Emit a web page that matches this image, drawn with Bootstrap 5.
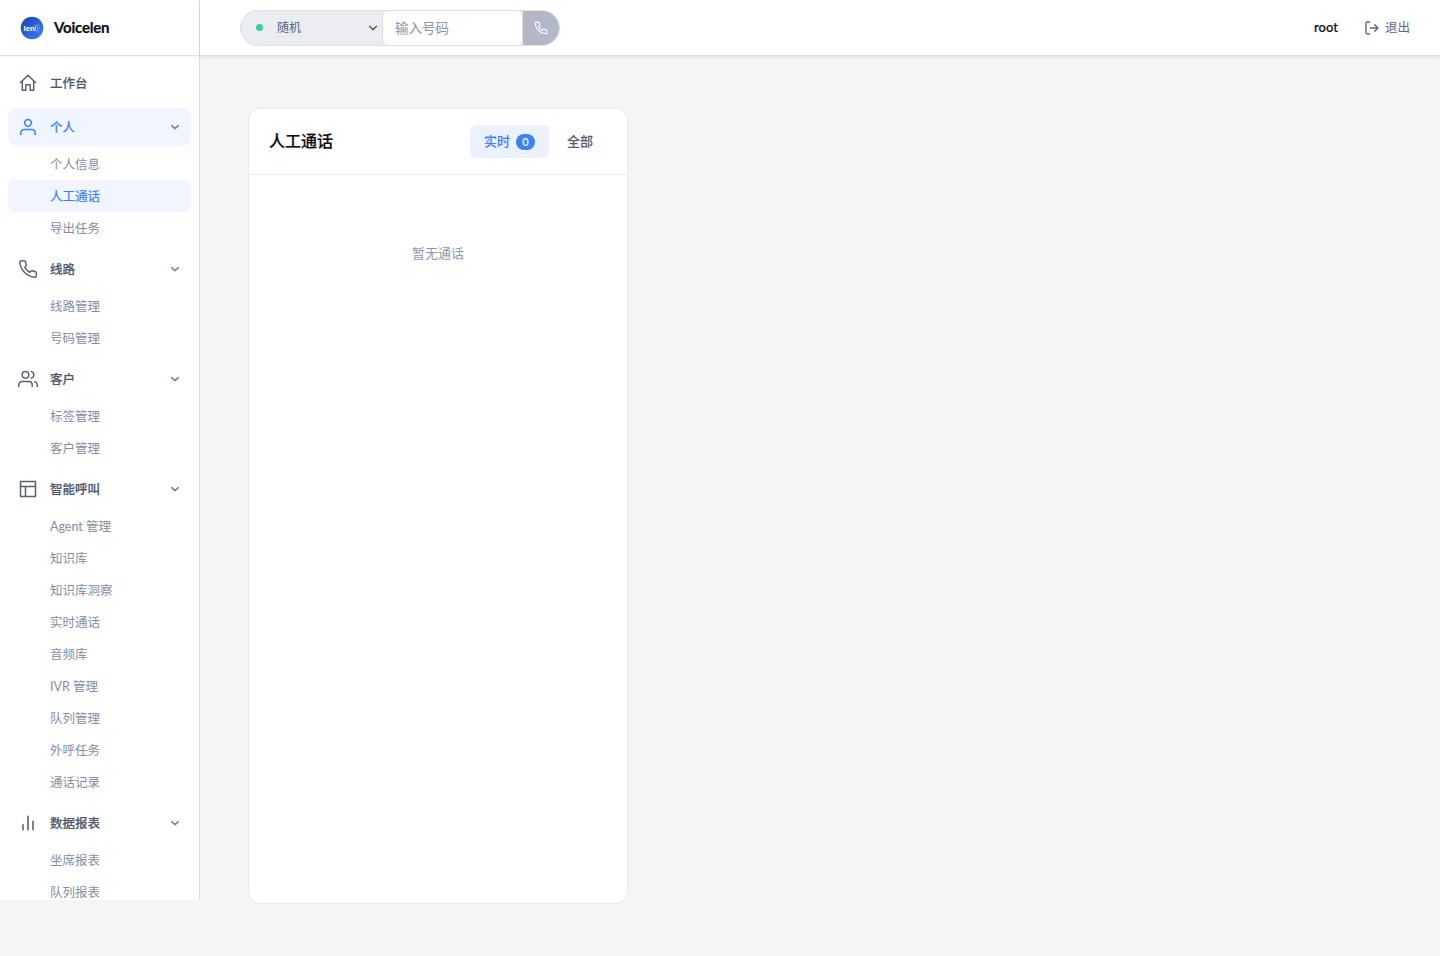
<!DOCTYPE html>
<html lang="zh-CN">
<head>
<meta charset="utf-8">
<meta name="viewport" content="width=device-width, initial-scale=1">
<title>Voicelen</title>
<link href="https://cdn.jsdelivr.net/npm/bootstrap@5.3.0/dist/css/bootstrap.min.css" rel="stylesheet">
<style>
body{font-family:Lato,"Noto Sans CJK SC",sans-serif;background:#f4f5f7;color:#0d1017;font-size:12.5px;height:956px;overflow:hidden}
svg{fill:none;stroke:currentColor;stroke-linecap:round;stroke-linejoin:round;flex:none}
.sidebar{width:200px;height:900px;border-right:1px solid #dcdfe5;background:#fff;overflow:hidden}
.brand{height:56px;padding-left:20px;gap:10px;border-bottom:1px solid #dcdfe5;box-shadow:0 1px 2px rgba(20,30,60,.06)}
.brand-name{font-size:15px;letter-spacing:-.2px;font-weight:700;color:#0b0d12;-webkit-text-stroke:.2px}
.brand svg text{font:700 7px "Open Sans",Lato,sans-serif;fill:#fff;stroke:none}
.menu{padding:8px 8px 0}
.menu-head{height:38px;padding:0 10px;border-radius:9px;color:#50586f;font-weight:500;-webkit-text-stroke:.2px;text-decoration:none;margin-bottom:2px}
.menu-head span,.logout span{padding-top:2px}
.menu-home{margin-bottom:6px;-webkit-text-stroke:.1px}
.menu-head>svg:first-child{margin-right:12px;color:#596178}
.menu-head.active{background:#f0f5ff;-webkit-text-stroke:.1px}
.menu-head.active,.menu-head.active>svg:first-child{color:#3b82f6}
.menu-head>svg.chev{color:#7d849b}
.menu-sub{margin-bottom:6px}
.menu-sub a{height:32px;padding:2px 0 0 42px;border-radius:6px;color:#858da3;text-decoration:none}
.menu-sub a.active{background:#f0f5ff;color:#3b82f6;-webkit-text-stroke:.2px}
.topbar{height:56px;padding:0 30px 0 40px;background:#fff;border-bottom:1px solid #dcdfe5;box-shadow:0 1px 3px rgba(20,30,60,.1)}
.dialer{width:320px;height:36px;border:1px solid #dcdee6;border-radius:18px;overflow:hidden;background:#ecedf1}
.line-pick{width:141px;padding:0 3px 0 15px;font-size:12px;color:#596178}
.dot{width:7px;height:7px;border-radius:50%;background:#34d399;margin-right:14px}
.pick-edge{width:1px;height:18px;background:#d9dbe4;margin-right:-1px}
.dial-input{width:141px;height:36px;margin:-1px 0;border:1px solid #dcdee6;border-radius:6px;padding:0 12px;font-size:13.5px;color:#4a5166;background:#fff;outline:0}
.dial-input::placeholder{color:#8e95a9;opacity:1}
.dial-btn{border:0;background:#b3b8c8;color:#fff;padding:0}
.user{font-size:13px;font-weight:500;-webkit-text-stroke:.2px;margin-right:26px}
.logout{gap:5px;color:#5d6680;text-decoration:none}
.logout svg{color:#5d6680}
.calls{width:380px;height:796px;margin:52px 0 0 48px;border:1px solid #e8eaef;border-radius:12px;background:#fff}
.calls-head{height:66px;padding:0 20px;border-bottom:1px solid #e8eaef}
.calls-title{font-size:16px;font-weight:500;-webkit-text-stroke:.22px;padding-bottom:2px}
.tab-btn{height:33px;border:0;background:none;border-radius:6px;padding:0 14px;font-size:13px;color:#545c72;font-weight:500;-webkit-text-stroke:.1px}
.tab-btn.active{background:#ebf1fe;color:#3b82f6;gap:6px}
.count{width:19px;height:16px;border-radius:8px;background:#3b82f6;color:#fff;font-size:11px;line-height:16px;margin-top:1px}
.empty{padding-top:68px;font-size:13px;line-height:20px;color:#8f96a8}
</style>
</head>
<body>
<div class="d-flex">
<aside class="sidebar flex-shrink-0">
  <div class="brand d-flex align-items-center">
    <svg width="24" height="24" viewBox="0 0 24 24"><defs><linearGradient id="lg" x1="0" y1="0" x2="1" y2="1"><stop stop-color="#1e40af"/><stop offset="1" stop-color="#3b82f6"/></linearGradient></defs><circle cx="12" cy="12" r="11.3" fill="url(#lg)" stroke="none"/><text x="3.6" y="14.6" textLength="11" lengthAdjust="spacingAndGlyphs">len</text><path d="M15.2 9.8q1.2 2.2 0 4.6" stroke="#fff" stroke-width=".7"/><path d="M16.9 8.8q1.8 3.2 0 6.6" stroke="#a9c4ff" stroke-width=".6"/><path d="M18.5 8q2.2 4 0 8.2" stroke="#7ea4f5" stroke-width=".5"/></svg>
    <span class="brand-name">Voicelen</span>
  </div>
  <nav class="menu">
    <a class="menu-head menu-home d-flex align-items-center" href="#"><svg width="20" height="20" viewBox="0 0 20 20" stroke-width="1.5"><path d="M2.5 9.5 10 2.3l7.5 7.2M4.3 8v9.2h3.5v-5.5h4.4v5.5h3.5V8"/></svg><span>工作台</span></a>
    <a class="menu-head active d-flex align-items-center" href="#"><svg width="20" height="20" viewBox="0 0 24 24" stroke-width="1.9"><circle cx="12" cy="7" r="4"/><path d="M3.5 21v-2a4 4 0 0 1 4-4h9a4 4 0 0 1 4 4v2"/></svg><span>个人</span><svg class="chev ms-auto" width="12" height="12" viewBox="0 0 12 12" stroke-width="1.6"><path d="m2.7 4.7 3.3 3 3.3-3"/></svg></a>
    <div class="menu-sub"><a class="d-flex align-items-center" href="#">个人信息</a><a class="active d-flex align-items-center" href="#">人工通话</a><a class="d-flex align-items-center" href="#">导出任务</a></div>
    <a class="menu-head d-flex align-items-center" href="#"><svg width="20" height="20" viewBox="0 0 24 24" stroke-width="1.8"><path d="M22 16.92v3a2 2 0 0 1-2.18 2 19.8 19.8 0 0 1-8.63-3.07 19.5 19.5 0 0 1-6-6 19.8 19.8 0 0 1-3.07-8.67A2 2 0 0 1 4.11 2h3a2 2 0 0 1 2 1.72c.13.96.36 1.9.7 2.81a2 2 0 0 1-.45 2.11L8.09 9.91a16 16 0 0 0 6 6l1.27-1.27a2 2 0 0 1 2.11-.45c.91.34 1.85.57 2.81.7A2 2 0 0 1 22 16.92z"/></svg><span>线路</span><svg class="chev ms-auto" width="12" height="12" viewBox="0 0 12 12" stroke-width="1.6"><path d="m2.7 4.7 3.3 3 3.3-3"/></svg></a>
    <div class="menu-sub"><a class="d-flex align-items-center" href="#">线路管理</a><a class="d-flex align-items-center" href="#">号码管理</a></div>
    <a class="menu-head d-flex align-items-center" href="#"><svg width="20" height="20" viewBox="0 0 24 24" stroke-width="1.8"><path d="M17 21v-2a4 4 0 0 0-4-4H5a4 4 0 0 0-4 4v2M23 21v-2a4 4 0 0 0-3-3.87M16 3.13a4 4 0 0 1 0 7.75"/><circle cx="9" cy="7" r="4"/></svg><span>客户</span><svg class="chev ms-auto" width="12" height="12" viewBox="0 0 12 12" stroke-width="1.6"><path d="m2.7 4.7 3.3 3 3.3-3"/></svg></a>
    <div class="menu-sub"><a class="d-flex align-items-center" href="#">标签管理</a><a class="d-flex align-items-center" href="#">客户管理</a></div>
    <a class="menu-head d-flex align-items-center" href="#"><svg width="20" height="20" viewBox="0 0 20 20" stroke-width="1.5"><path d="M2.5 2.5h15v15h-15zM2.5 7.5h15M7.5 7.5v10"/></svg><span>智能呼叫</span><svg class="chev ms-auto" width="12" height="12" viewBox="0 0 12 12" stroke-width="1.6"><path d="m2.7 4.7 3.3 3 3.3-3"/></svg></a>
    <div class="menu-sub"><a class="d-flex align-items-center" href="#">Agent 管理</a><a class="d-flex align-items-center" href="#">知识库</a><a class="d-flex align-items-center" href="#">知识库洞察</a><a class="d-flex align-items-center" href="#">实时通话</a><a class="d-flex align-items-center" href="#">音频库</a><a class="d-flex align-items-center" href="#">IVR 管理</a><a class="d-flex align-items-center" href="#">队列管理</a><a class="d-flex align-items-center" href="#">外呼任务</a><a class="d-flex align-items-center" href="#">通话记录</a></div>
    <a class="menu-head d-flex align-items-center" href="#"><svg width="20" height="20" viewBox="0 0 20 20" stroke-width="1.6"><path d="M5 11.7v5M10 3.2v13.5M15 8.3v8.4"/></svg><span>数据报表</span><svg class="chev ms-auto" width="12" height="12" viewBox="0 0 12 12" stroke-width="1.6"><path d="m2.7 4.7 3.3 3 3.3-3"/></svg></a>
    <div class="menu-sub"><a class="d-flex align-items-center" href="#">坐席报表</a><a class="d-flex align-items-center" href="#">队列报表</a></div>
  </nav>
</aside>
<div class="flex-grow-1">
  <header class="topbar d-flex align-items-center justify-content-between">
    <div class="dialer d-flex">
      <div class="line-pick d-flex align-items-center"><span class="dot"></span><span>随机</span><svg class="ms-auto" width="12" height="12" viewBox="0 0 12 12" stroke-width="1.5"><path d="m2.5 4.2 3.5 3.4 3.5-3.4"/></svg></div>
      <span class="pick-edge align-self-center"></span>
      <input class="dial-input" type="text" placeholder="输入号码">
      <button class="dial-btn flex-grow-1 d-flex align-items-center justify-content-center" type="button" aria-label="拨打"><svg width="14" height="14" viewBox="0 0 24 24" stroke-width="2"><path d="M22 16.92v3a2 2 0 0 1-2.18 2 19.8 19.8 0 0 1-8.63-3.07 19.5 19.5 0 0 1-6-6 19.8 19.8 0 0 1-3.07-8.67A2 2 0 0 1 4.11 2h3a2 2 0 0 1 2 1.72c.13.96.36 1.9.7 2.81a2 2 0 0 1-.45 2.11L8.09 9.91a16 16 0 0 0 6 6l1.27-1.27a2 2 0 0 1 2.11-.45c.91.34 1.85.57 2.81.7A2 2 0 0 1 22 16.92z"/></svg></button>
    </div>
    <div class="d-flex align-items-center">
      <span class="user">root</span>
      <a class="logout d-flex align-items-center" href="#"><svg width="16" height="16" viewBox="0 0 16 16" stroke-width="1.4"><path d="M5.7 2H3.5A1.5 1.5 0 0 0 2 3.5v9A1.5 1.5 0 0 0 3.5 14h2.2M6.3 8H14M10.7 4.7 14 8l-3.3 3.3"/></svg><span>退出</span></a>
    </div>
  </header>
  <main>
    <section class="calls">
      <div class="calls-head d-flex align-items-center justify-content-between">
        <span class="calls-title">人工通话</span>
        <div class="d-flex gap-1">
          <button class="tab-btn active d-flex align-items-center" type="button">实时<span class="count text-center">0</span></button>
          <button class="tab-btn" type="button">全部</button>
        </div>
      </div>
      <div class="empty text-center">暂无通话</div>
    </section>
  </main>
</div>
</div>
<script src="https://cdn.jsdelivr.net/npm/bootstrap@5.3.0/dist/js/bootstrap.bundle.min.js"></script>
</body>
</html>
